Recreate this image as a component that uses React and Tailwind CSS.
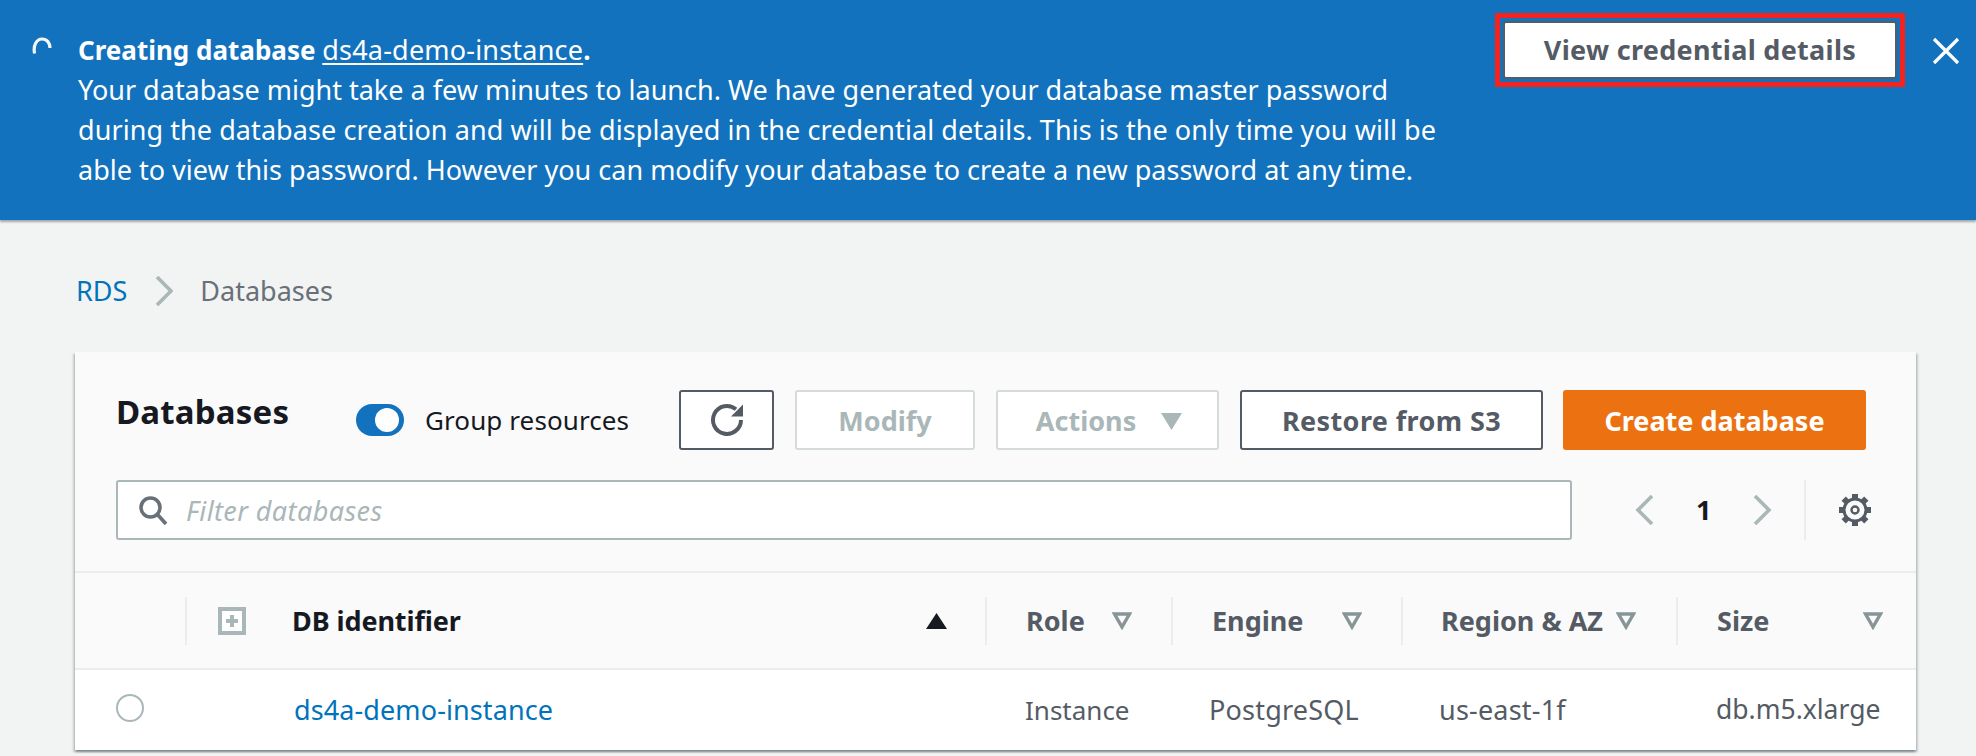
import React from 'react'

function Spinner() {
  return (
    <svg width="20" height="18" viewBox="0 0 20 18" fill="none" className="mt-[7px] shrink-0">
      <path d="M2.6 16.5 C0.8 8 5 2 10 2 C15 2 18 6 18 11" stroke="#fff" strokeWidth="3.2" opacity="0.95" />
    </svg>
  )
}

function Refresh() {
  return (
    <svg width="34" height="34" viewBox="0 0 34 34" fill="none">
      <path d="M26 6.2 A14 14 0 1 0 31 17" stroke="#545b64" strokeWidth="4" />
      <path d="M21 13.5 L33 13.5 L33 1.5 Z" fill="#545b64" />
    </svg>
  )
}

function Gear() {
  const teeth = [0, 45, 90, 135, 180, 225, 270, 315]
  return (
    <svg width="32" height="32" viewBox="0 0 32 32" fill="none">
      <circle cx="16" cy="16" r="11" stroke="#545b64" strokeWidth="3" />
      {teeth.map((a) => (
        <rect key={a} x="13" y="0" width="6" height="5" fill="#545b64" transform={`rotate(${a} 16 16)`} />
      ))}
      <circle cx="16" cy="16" r="3.5" stroke="#545b64" strokeWidth="2.4" />
    </svg>
  )
}

function Chevron({ dir, className }) {
  return (
    <svg width="19" height="30" viewBox="0 0 19 30" fill="none" className={`shrink-0 ${className}`}>
      <path d={dir === 'left' ? 'M17 1 L3 15 L17 29' : 'M2 1 L16 15 L2 29'} stroke="#aab7b8" strokeWidth="3.6" />
    </svg>
  )
}

function FilterIcon() {
  return (
    <svg width="20" height="18" viewBox="0 0 20 18" fill="none" className="shrink-0">
      <path d="M2.5 2 H17.5 L10 15 Z" stroke="#879596" strokeWidth="3.4" strokeLinejoin="miter" />
    </svg>
  )
}

function HeaderCell({ label, pl = 'pl-[39px]', pr = 'pr-[39px]' }) {
  return (
    <div className={`flex h-12 items-center justify-between border-l-2 border-[#eaeded] ${pl} ${pr}`}>
      <span className="pt-[2px] text-[27px] font-bold text-[#545b64]">{label}</span>
      <FilterIcon />
    </div>
  )
}

export default function App() {
  return (
    <div className="h-[756px] w-full overflow-hidden bg-[#f2f3f3] font-['Noto_Sans',sans-serif] text-[#16191f]">
      {/* flash banner */}
      <div className="flex h-[220px] items-start bg-[#1272bd] pl-[32px] pt-[13px] text-white shadow-[0_2px_2px_rgba(0,28,36,0.35)]">
        <div className="flex pt-[17px]">
          <Spinner />
          <div className="ml-[26px] text-[27px] leading-[40px]">
            <div>
              <b className="text-[26px] font-bold">Creating database </b>
              <a className="tracking-[0.2px] underline underline-offset-[3px]">ds4a-demo-instance</a>
              <b className="text-[26px] font-bold">.</b>
            </div>
            <div>Your database might take a few minutes to launch. We have generated your database master password</div>
            <div className="tracking-[0.07px]">during the database creation and will be displayed in the credential details. This is the only time you will be</div>
            <div>able to view this password. However you can modify your database to create a new password at any time.</div>
          </div>
        </div>
        <div className="ml-auto border-[5px] border-[#f5231d] p-[3px]">
          <button className="h-[58px] w-[394px] rounded-[3px] border-[2px] border-[#545b64] bg-white text-[27px] font-bold tracking-[0.3px] text-[#545b64]">
            View credential details
          </button>
        </div>
        <svg width="28" height="28" viewBox="0 0 28 28" fill="none" className="ml-[27px] mr-[16px] mt-[24px] shrink-0">
          <path d="M2 2 L26 26 M26 2 L2 26" stroke="#fff" strokeWidth="3.2" />
        </svg>
      </div>

      {/* breadcrumb */}
      <div className="mt-[51px] flex h-[40px] items-center pl-[76px] text-[27px]">
        <a className="text-[#0073bb]">RDS</a>
        <svg width="18" height="30" viewBox="0 0 18 30" fill="none" className="ml-[28px]">
          <path d="M2 1 L16 15 L2 29" stroke="#aab7b8" strokeWidth="3.6" />
        </svg>
        <span className="ml-[27px] text-[#687078]">Databases</span>
      </div>

      {/* card */}
      <div className="ml-[75px] mt-[41px] w-[1841px] bg-[#fafafa] shadow-[0_2px_2px_0_rgba(0,28,36,0.3),2px_2px_2px_0_rgba(0,28,36,0.15),-2px_2px_2px_0_rgba(0,28,36,0.15)]">
        <div className="h-[219px] pl-[41px] pr-[45px] pt-[38px]">
          <div className="flex h-[60px] items-center pr-[5px]">
            <h1 className="w-[240px] -translate-y-[8px] text-[33px] font-bold tracking-[0.2px]">Databases</h1>
            <div className="flex h-[32px] w-[48px] items-center justify-end rounded-full bg-[#1272bd] pr-[5px]">
              <div className="h-[24px] w-[24px] rounded-full bg-white" />
            </div>
            <span className="ml-[21px] text-[26px] tracking-[0.1px]">Group resources</span>
            <div className="ml-auto flex gap-[21px] text-[27px] font-bold">
              <button className="flex h-[60px] w-[95px] items-center justify-center rounded-[3px] border-2 border-[#545b64] bg-white">
                <Refresh />
              </button>
              <button className="h-[60px] w-[180px] rounded-[3px] border-2 border-[#d5dbdb] bg-white pt-[2px] text-[#aab7b8]">Modify</button>
              <button className="flex h-[60px] w-[223px] items-center justify-center gap-[25px] rounded-[3px] border-2 border-[#d5dbdb] bg-white pl-[3px] pt-[2px] text-[#aab7b8]">
                Actions
                <svg width="21" height="17" viewBox="0 0 21 17"><path d="M0 0 H21 L10.5 17 Z" fill="#aab7b8" /></svg>
              </button>
              <button className="h-[60px] w-[303px] rounded-[3px] border-2 border-[#545b64] bg-white pt-[2px] tracking-[0.4px] text-[#545b64]">Restore from S3</button>
              <button className="-ml-[1px] h-[60px] w-[303px] rounded-[3px] bg-[#ec7211] pt-[2px] text-white">Create database</button>
            </div>
          </div>
          <div className="mt-[30px] flex h-[60px] items-center">
            <div className="flex h-[60px] w-[1456px] shrink-0 items-center rounded-[3px] border-2 border-[#aab7b8] bg-white pl-[20px]">
              <svg width="30" height="30" viewBox="0 0 30 30" fill="none" stroke="#687078" strokeWidth="3.6">
                <circle cx="12.5" cy="12.5" r="9.5" />
                <path d="M19.5 19.5 L28 29" />
              </svg>
              <span className="ml-[18px] pt-[2px] text-[27px] italic tracking-[0.4px] text-[#aab7b8]">Filter databases</span>
            </div>
            <Chevron dir="left" className="ml-[63px]" />
            <span className="ml-[41px] w-[17px] translate-x-[1px] text-[27px] font-bold">1</span>
            <Chevron dir="right" className="ml-[43px]" />
            <div className="ml-[32px] h-[60px] w-[2px] shrink-0 bg-[#eaeded]" />
            <div className="ml-[33px]"><Gear /></div>
          </div>
        </div>

        {/* table header */}
        <div className="grid h-[97px] grid-cols-[110px_800px_186px_230px_275px_240px] items-center border-t-2 border-[#eaeded]">
          <div />
          <div className="flex h-12 items-center border-l-2 border-[#eaeded] pl-[31px] pr-[38px]">
            <svg width="28" height="28" viewBox="0 0 28 28" className="shrink-0">
              <rect x="2" y="2" width="24" height="24" fill="#fff" stroke="#aab7b8" strokeWidth="4" />
              <path d="M14 8 V20 M8 14 H20" stroke="#aab7b8" strokeWidth="4" />
            </svg>
            <span className="ml-[46px] pt-[2px] text-[27px] font-bold tracking-[-0.1px]">DB identifier</span>
            <svg width="21" height="16" viewBox="0 0 21 16" className="ml-auto"><path d="M10.5 0 L21 16 H0 Z" fill="#16191f" /></svg>
          </div>
          <HeaderCell label="Role" />
          <HeaderCell label="Engine" />
          <HeaderCell label="Region & AZ" pl="pl-[38px]" pr="pr-[40px]" />
          <HeaderCell label="Size" pr="pr-[33px]" />
        </div>

        {/* table row */}
        <div className="grid h-[82px] grid-cols-[110px_800px_186px_230px_275px_240px] items-center border-t-2 border-[#eaeded] bg-white text-[27px] text-[#545b64]">
          <div className="pl-[41px]">
            <div className="-mt-[4px] h-[28px] w-[28px] rounded-full border-2 border-[#aab7b8]" />
          </div>
          <a className="pl-[109px] pt-[1px] tracking-[0.1px] text-[#0073bb]">ds4a-demo-instance</a>
          <span className="pl-[40px] text-[26px]">Instance</span>
          <span className="pl-[38px] tracking-[0.2px]">PostgreSQL</span>
          <span className="pl-[38px] tracking-[0.2px]">us-east-1f</span>
          <span className="pl-[40px] text-[26.5px]">db.m5.xlarge</span>
        </div>
      </div>
    </div>
  )
}
